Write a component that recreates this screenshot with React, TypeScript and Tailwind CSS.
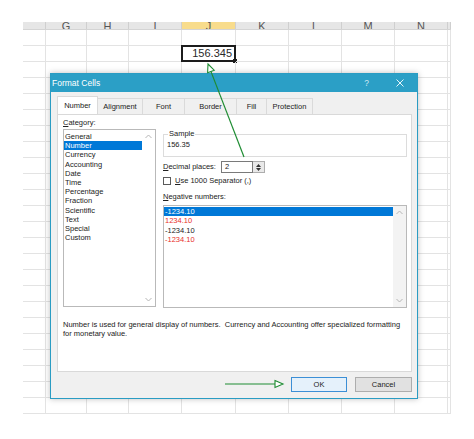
import React from 'react';

const cols = [
  { w: 23, label: '' },
  { w: 41, label: 'G' },
  { w: 42, label: 'H' },
  { w: 53, label: 'I' },
  { w: 54, label: 'J' },
  { w: 53, label: 'K' },
  { w: 53, label: 'L' },
  { w: 53, label: 'M' },
  { w: 53, label: 'N' },
  { w: 3, label: '' },
];

const rows = Array.from({ length: 24 }, (_, i) => i);

const categories = [
  'General', 'Number', 'Currency', 'Accounting', 'Date', 'Time',
  'Percentage', 'Fraction', 'Scientific', 'Text', 'Special', 'Custom',
];

const tabs = [
  { label: 'Number', w: 41 },
  { label: 'Alignment', w: 45 },
  { label: 'Font', w: 42 },
  { label: 'Border', w: 52 },
  { label: 'Fill', w: 30 },
  { label: 'Protection', w: 46 },
];

function Chevron({ up }: { up?: boolean }) {
  return (
    <svg width="7" height="5" viewBox="0 0 7 5" className="block">
      <path d={up ? 'M0.5 4 L3.5 1 L6.5 4' : 'M0.5 1 L3.5 4 L6.5 1'} fill="none" stroke="#b5b5b5" strokeWidth="1" />
    </svg>
  );
}

function Sheet() {
  return (
    <div className="ml-[23px] mt-[22px] w-[428px]">
      {/* column header */}
      <div className="flex h-[8px] overflow-hidden bg-[#e6e6e6] border-b border-[#d4d4d4]">
        {cols.map((c, i) => (
          <div
            key={i}
            style={{ width: c.w }}
            className={`relative shrink-0 h-full overflow-hidden border-r border-[#cfcfcf] ${c.label === 'J' ? 'bg-[#f8dc8c]' : ''}`}
          >
            <span className="absolute left-0 right-0 bottom-[-3px] text-center text-[11px] leading-[11px] text-[#555]">{c.label}</span>
          </div>
        ))}
      </div>
      {rows.map((r) => (
        <div key={r} className="flex h-[16px]">
          {cols.map((c, i) => (
            <div key={i} style={{ width: c.w }} className="relative shrink-0 h-full border-r border-b border-[#e3e3e3]">
              {r === 1 && c.label === 'J' && (
                <div className="absolute left-[-1px] top-[-1px] w-[55px] h-[17px] border-2 border-[#1c1c1c] flex items-center justify-end pr-[2px] bg-white">
                  <span className="text-[11px] leading-none text-[#2a2a2a]">156.345</span>
                  <span className="absolute right-[-3px] bottom-[-3px] w-[4px] h-[4px] bg-[#1c1c1c]" />
                </div>
              )}
            </div>
          ))}
        </div>
      ))}
    </div>
  );
}

function Dialog() {
  return (
    <div className="absolute left-[50px] top-[73px] w-[368px] h-[326px] bg-[#f0f0f0] border border-[#2a9cc3] shadow-[0_0_6px_rgba(0,0,0,0.25)] flex flex-col text-[7.5px] text-[#222]">
      {/* title bar */}
      <div className="h-[18px] bg-[#2b9fc6] flex items-center pl-[1px] shrink-0">
        <span className="text-white text-[8.5px]">Format Cells</span>
        <span className="ml-auto text-[#cfeaf4] text-[8.5px] mr-[27px]">?</span>
        <svg width="8" height="8" viewBox="0 0 8 8" className="mr-[13px]">
          <path d="M0.5 0.5 L7.5 7.5 M7.5 0.5 L0.5 7.5" stroke="#e6f5fa" strokeWidth="1" />
        </svg>
      </div>

      {/* tabs */}
      <div className="flex mt-[6px] ml-[6px] h-[16px] shrink-0">
        {tabs.map((t, i) => (
          <div
            key={t.label}
            style={{ width: t.w }}
            className={`flex items-center justify-center border-t border-r border-[#dadada] ${i === 0 ? 'bg-white border-l -mt-[2px] h-[18px] relative z-10' : 'bg-[#f0f0f0]'}`}
          >
            {t.label}
          </div>
        ))}
      </div>

      {/* panel */}
      <div className="mx-[6px] w-[355px] h-[258px] bg-white border border-[#d9d9d9] pl-[5px] pt-[3px] shrink-0">
        <div className="flex gap-[7px]">
          {/* category */}
          <div className="w-[93px]">
            <div className="h-[10px] leading-[10px]">
              <span className="underline">C</span>ategory:
            </div>
            <div className="mt-[1px] h-[178px] border border-[#b9b9b9] flex">
              <div className="flex-1 pt-[2px]">
                {categories.map((c) => (
                  <div
                    key={c}
                    className={`h-[9.2px] leading-[9.2px] pl-[1px] ${c === 'Number' ? 'bg-[#0078d7] text-white' : ''}`}
                  >
                    {c}
                  </div>
                ))}
              </div>
              <div className="w-[13px] flex flex-col items-center justify-between py-[4px]">
                <Chevron up />
                <Chevron />
              </div>
            </div>
          </div>

          {/* right side */}
          <div className="w-[244px]">
            <fieldset className="mt-[11px] h-[28px] border border-[#dcdcdc] pl-[3px]">
              <legend className="px-[1px] ml-[1px] leading-[10px]">Sample</legend>
              <div className="leading-[9px] mt-[1px]">156.35</div>
            </fieldset>

            <div className="mt-[4px] h-[12px] flex items-center">
              <span className="w-[58px]">
                <span className="underline">D</span>ecimal places:
              </span>
              <div className="w-[32px] h-[12px] border border-[#7a7a7a] bg-white flex items-center pl-[3px]">2</div>
              <div className="w-[12px] h-[12px] border border-l-0 border-[#adadad] bg-[#e9e9e9] flex flex-col items-center justify-center gap-[1px]">
                <svg width="5" height="3" viewBox="0 0 5 3" className="block"><path d="M0 3 L2.5 0 L5 3 Z" fill="#333" /></svg>
                <svg width="5" height="3" viewBox="0 0 5 3" className="block"><path d="M0 0 L2.5 3 L5 0 Z" fill="#333" /></svg>
              </div>
            </div>

            <div className="mt-[3px] h-[9px] flex items-center gap-[4px]">
              <div className="w-[8px] h-[8px] border border-[#5a5a5a] bg-white" />
              <span>
                <span className="underline">U</span>se 1000 Separator (,)
              </span>
            </div>

            <div className="mt-[7px] h-[10px] leading-[10px]">
              <span className="underline">N</span>egative numbers:
            </div>

            <div className="mt-[3px] h-[103px] border border-[#b9b9b9] flex">
              <div className="flex-1 pt-[1px]">
                <div className="h-[9.3px] leading-[9.3px] pl-[1px] bg-[#0078d7] text-white">-1234.10</div>
                <div className="h-[9.3px] leading-[9.3px] pl-[1px] text-[#e8302a]">1234.10</div>
                <div className="h-[9.3px] leading-[9.3px] pl-[1px]">-1234.10</div>
                <div className="h-[9.3px] leading-[9.3px] pl-[1px] text-[#e8302a]">-1234.10</div>
              </div>
              <div className="w-[13px] bg-[#f3f3f3] flex flex-col items-center justify-between py-[4px]">
                <Chevron up />
                <Chevron />
              </div>
            </div>
          </div>
        </div>

        <div className="mt-[12px] leading-[9px] whitespace-pre">
          <div>Number is used for general display of numbers.  Currency and Accounting offer specialized formatting</div>
          <div>for monetary value.</div>
        </div>
      </div>

      {/* buttons */}
      <div className="mt-[5px] mr-[5px] flex justify-end gap-[8px]">
        <button className="w-[56px] h-[15px] bg-[#e5f1fb] border border-[#3c8fd6] text-[7.5px] text-[#222]">OK</button>
        <button className="w-[57px] h-[15px] bg-[#e1e1e1] border border-[#adadad] text-[7.5px] text-[#222]">Cancel</button>
      </div>
    </div>
  );
}

export default function App() {
  return (
    <div className="relative w-[474px] h-[439px] bg-white overflow-hidden font-['Liberation_Sans',Arial,sans-serif]">
      <Sheet />
      <Dialog />
      {/* annotation arrows */}
      <svg width="474" height="439" viewBox="0 0 474 439" className="absolute left-0 top-0 pointer-events-none">
        <line x1="244" y1="157" x2="210.9" y2="71.4" stroke="#1e8c32" strokeWidth="1.2" />
        <polygon points="208,64 214.2,70.2 207.6,72.7" fill="white" stroke="#1e8c32" strokeWidth="1.1" />
        <line x1="225" y1="384" x2="275" y2="384" stroke="#1e8c32" strokeWidth="1.2" />
        <polygon points="275,380.5 283,384 275,387.5" fill="white" stroke="#1e8c32" strokeWidth="1.1" />
      </svg>
    </div>
  );
}
